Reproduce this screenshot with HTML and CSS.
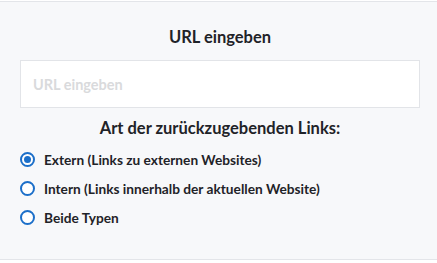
FILE: index.html
```html
<!DOCTYPE html>
<html lang="de">
<head>
<meta charset="utf-8">
<link rel="stylesheet" href="styles.css">
</head>
<body>
<div class="panel">
  <h2 class="title">URL eingeben</h2>
  <input class="url" type="text" placeholder="URL eingeben">
  <h2 class="title sub">Art der zurückzugebenden Links:</h2>
  <div class="options">
    <label class="opt"><span class="radio on"></span>Extern (Links zu externen Websites)</label>
    <label class="opt"><span class="radio"></span>Intern (Links innerhalb der aktuellen Website)</label>
    <label class="opt"><span class="radio"></span>Beide Typen</label>
  </div>
</div>
</body>
</html>
```
FILE: styles.css
```css
html, body { margin: 0; padding: 0; background: #fff; }
body { font-family: Lato, "Noto Sans", sans-serif; color: #1f2328; }
.panel {
  margin-top: 1px;
  height: 259px;
  background: #f7f8fa;
  border-top: 1px solid #e3e5e9;
  border-bottom: 1px solid #e3e5e9;
  padding: 0 17px 0 20px;
  box-sizing: border-box;
  display: flex;
  flex-direction: column;
}
.title {
  margin: 0;
  text-align: center;
  font-size: 16.5px;
  font-weight: 700;
  line-height: 20px;
  padding-top: 25px;
  height: 20px;
}
.url {
  margin-top: 13px;
  width: 400px;
  height: 48px;
  box-sizing: border-box;
  border: 1px solid #e2e4e8;
  background: #fff;
  padding: 0 12px;
  font-family: inherit;
  font-size: 14.5px;
  font-weight: 700;
  outline: none;
}
.url::placeholder { color: #d9dadc; }
.sub { padding-top: 10px; }
.options { display: flex; flex-direction: column; gap: 9px; margin-top: 11.5px; }
.opt {
  display: flex;
  align-items: center;
  gap: 9px;
  font-size: 13.7px;
  font-weight: 700;
  line-height: 20px;
  color: #1f2328;
}
.radio {
  width: 15px;
  height: 15px;
  box-sizing: border-box;
  border: 2px solid #1c6fc9;
  border-radius: 50%;
  background: #fff;
  display: flex;
  align-items: center;
  justify-content: center;
}
.radio.on::after {
  content: "";
  width: 7px;
  height: 7px;
  border-radius: 50%;
  background: #1c6fc9;
}
```
